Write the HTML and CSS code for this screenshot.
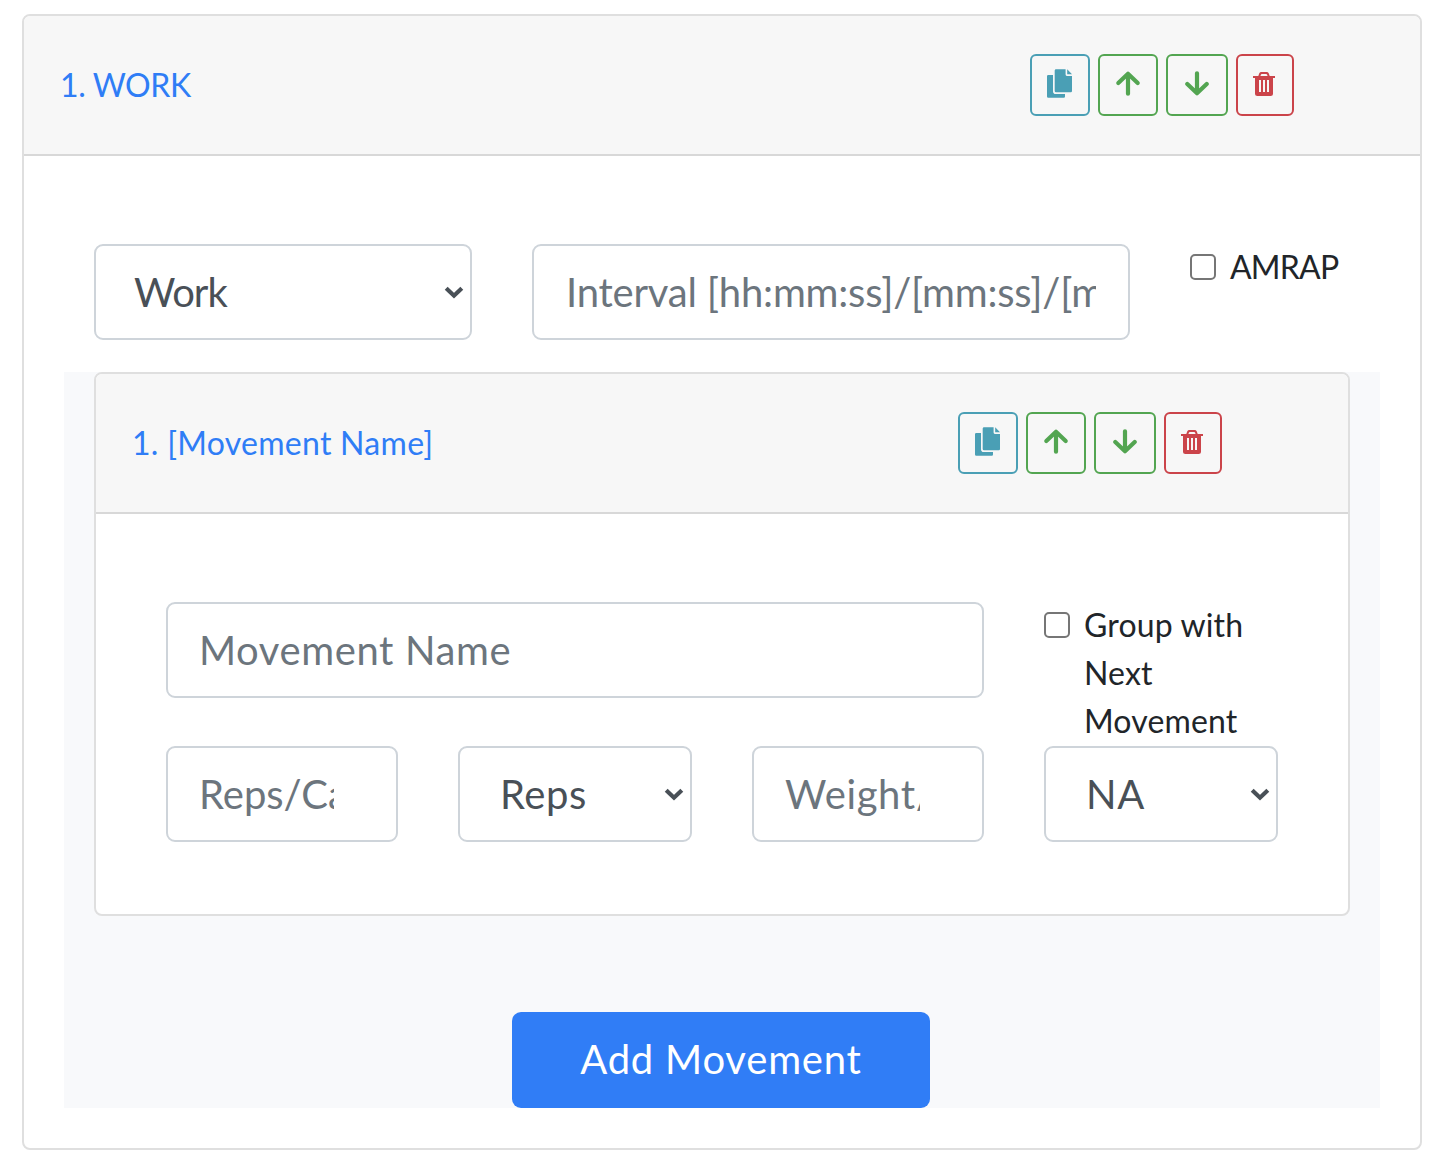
FILE: index.html
```html
<!DOCTYPE html>
<html lang="en">
<head>
<meta charset="utf-8">
<title>Workout</title>
<link rel="stylesheet" href="styles.css">
</head>
<body>
<svg class="sprite" aria-hidden="true">
  <symbol id="copy" viewBox="0 0 26 30"><path d="M0 7.2Q0 6 1.2 6H6V22.2Q6 25 8.8 25H18V27.5Q18 28.7 16.8 28.7H1.2Q0 28.7 0 27.500z"/><path d="M9 .3H18.600V5.600Q18.600 6.900 19.900 6.900H25V22Q25 23.200 23.800 23.200H9Q7.700 23.200 7.700 22V1.500Q7.700.3 9 .3z"/><path d="M20.200.3L25 5.200H20.200z"/></symbol>
  <symbol id="up" viewBox="0 0 26 26"><path class="stroke" d="M3.300 13L13 3.800L22.700 13M13 4.500V23.700"/></symbol>
  <symbol id="down" viewBox="0 0 26 26"><path class="stroke" d="M3.300 14L13 23.200L22.700 14M13 22.500V3.300"/></symbol>
  <symbol id="trash" viewBox="0 0 22 24"><path d="M0 4H5.300L6.300 1.300Q6.900 0 8.300 0H13.700Q15.100 0 15.700 1.300L16.700 4H22V6H20V21.500Q20 24 17.500 24H4.500Q2 24 2 21.500V6H0zM7.400 4H14.600L14 2.400Q13.800 2 13.300 2H8.700Q8.200 2 8 2.400zM6 8V20H8V8zM10 8V20H12V8zM14 8V20H16V8z" fill-rule="evenodd"/></symbol>
  <symbol id="chevron" viewBox="0 0 20 14"><path class="stroke" d="M2.200 3.200L10 10.700L17.800 3.200"/></symbol>
</svg>
<section class="card work">
  <header class="card-header">
    <a class="title title-work">1. WORK</a>
    <div class="actions">
      <button class="btn info"><svg class="copy"><use href="#copy"/></svg></button>
      <button class="btn success"><svg class="arrow"><use href="#up"/></svg></button>
      <button class="btn success wide"><svg class="arrow"><use href="#down"/></svg></button>
      <button class="btn danger"><svg class="trash"><use href="#trash"/></svg></button>
    </div>
  </header>
  <div class="work-body">
    <div class="work-fields">
      <div class="select kind"><select class="control"><option>Work</option></select><svg><use href="#chevron"/></svg></div>
      <input class="control interval" placeholder="Interval [hh:mm:ss]/[mm:ss]/[minutes]">
      <label class="check"><input type="checkbox"><span class="amrap">AMRAP</span></label>
    </div>
    <div class="movements">
      <section class="card">
        <header class="card-header">
          <a class="title title-movement">1. [Movement Name]</a>
          <div class="actions">
            <button class="btn info"><svg class="copy"><use href="#copy"/></svg></button>
            <button class="btn success"><svg class="arrow"><use href="#up"/></svg></button>
            <button class="btn success wide"><svg class="arrow"><use href="#down"/></svg></button>
            <button class="btn danger"><svg class="trash"><use href="#trash"/></svg></button>
          </div>
        </header>
        <div class="movement-fields">
          <input class="control name" placeholder="Movement Name">
          <label class="check group"><input type="checkbox"><span>Group with<br>Next<br>Movement</span></label>
          <input class="control reps" placeholder="Reps/Calories">
          <div class="select"><select class="control"><option>Reps</option></select><svg><use href="#chevron"/></svg></div>
          <input class="control weight" placeholder="Weight/Distance">
          <div class="select"><select class="control"><option>NA</option></select><svg><use href="#chevron"/></svg></div>
        </div>
      </section>
      <button class="add">Add Movement</button>
    </div>
  </div>
</section>
</body>
</html>
```
FILE: styles.css
```css
* { box-sizing: border-box; }

body {
  margin: 0;
  padding: 14px 28px 26px 22px;
  background: #fff;
  color: #212529;
  font: 32px/48px Lato, "Open Sans", sans-serif;
}

.sprite { display: none; }
svg { fill: currentColor; flex: none; }
.stroke { fill: none; stroke: currentColor; stroke-width: 4.2; stroke-linejoin: round; stroke-linecap: round; }
#chevron .stroke { stroke-linejoin: miter; stroke-linecap: butt; }

.card {
  border: 2px solid #dfdfdf;
  border-radius: 8px;
  background: #fff;
  overflow: hidden;
}
.work { height: 1136px; }

.card-header {
  display: flex;
  justify-content: space-between;
  align-items: center;
  height: 140px;
  padding: 0 126px 0 36px;
  border-bottom: 2px solid #d8d8d8;
  background: #f7f7f7;
}
.title { color: #2f7df6; white-space: nowrap; }
.title-work { letter-spacing: -0.4px; }
.title-movement { letter-spacing: 0.28px; }

.actions { display: flex; gap: 8px; }
.btn {
  display: flex;
  align-items: center;
  justify-content: center;
  width: 60px;
  height: 62px;
  padding: 0;
  border: 2px solid;
  border-radius: 6px;
  background: transparent;
}
.btn.wide { width: 62px; }
.btn.danger { width: 58px; color: #cb444a; }
.info { color: #4a9fb5; }
.success { color: #53a551; }
.copy { width: 26px; height: 30px; margin-bottom: 2px; }
.arrow { width: 26px; height: 26px; margin-bottom: 4px; }
.trash { width: 22px; height: 24px; margin: 0 2px 2px 0; }

.work-body { padding: 88px 40px 40px; }
.work-fields {
  display: grid;
  grid-template-columns: 378px 598px 160px;
  column-gap: 60px;
  padding-left: 30px;
  height: 128px;
}

.control {
  width: 100%;
  height: 96px;
  margin: 0;
  padding: 0 32px;
  border: 2px solid #ced4da;
  border-radius: 9px;
  background: #fff;
  color: #495057;
  font: 40px/60px Lato, "Open Sans", sans-serif;
  letter-spacing: 0.6px;
  appearance: none;
}
.control::placeholder { color: #6c757d; opacity: 1; }
select.control { padding: 0 40px; }
.kind .control { padding-left: 38px; letter-spacing: -1px; }
.interval { letter-spacing: -0.2px; }
.name { padding-left: 31px; }
.reps { padding: 0 62px 0 31px; letter-spacing: 0; }
.weight { padding: 0 62px 0 31px; }

.select { display: grid; align-items: center; height: 96px; color: #495057; }
.select > * { grid-area: 1 / 1; }
.select svg { justify-self: end; width: 20px; height: 14px; margin-right: 8px; pointer-events: none; }

.check { display: flex; align-items: flex-start; white-space: nowrap; }
.check span { margin-top: -1px; letter-spacing: 0.15px; }
.check .amrap { letter-spacing: -0.8px; }
.check input {
  flex: none;
  width: 26px;
  height: 26px;
  margin: 10px 14px 0 0;
  border: 2px solid #767676;
  border-radius: 5px;
  background: #fff;
  appearance: none;
}

.movements {
  display: flex;
  flex-direction: column;
  height: 736px;
  padding: 0 30px;
  background: #f8f9fb;
}
.movements .card { height: 544px; }

.movement-fields {
  display: grid;
  grid-template-columns: 232px 234px 232px 234px;
  grid-template-rows: 96px 96px;
  gap: 48px 60px;
  padding: 88px 70px;
}
.movement-fields .name { grid-column: 1 / 4; }
.group { height: 96px; }

.add {
  align-self: center;
  width: 418px;
  height: 96px;
  margin: 96px 2px 0 0;
  padding: 0 0 3px;
  border: 0;
  border-radius: 9px;
  background: #307df6;
  color: #fff;
  font: 40px/60px Lato, "Open Sans", sans-serif;
  letter-spacing: 0.8px;
}
```
